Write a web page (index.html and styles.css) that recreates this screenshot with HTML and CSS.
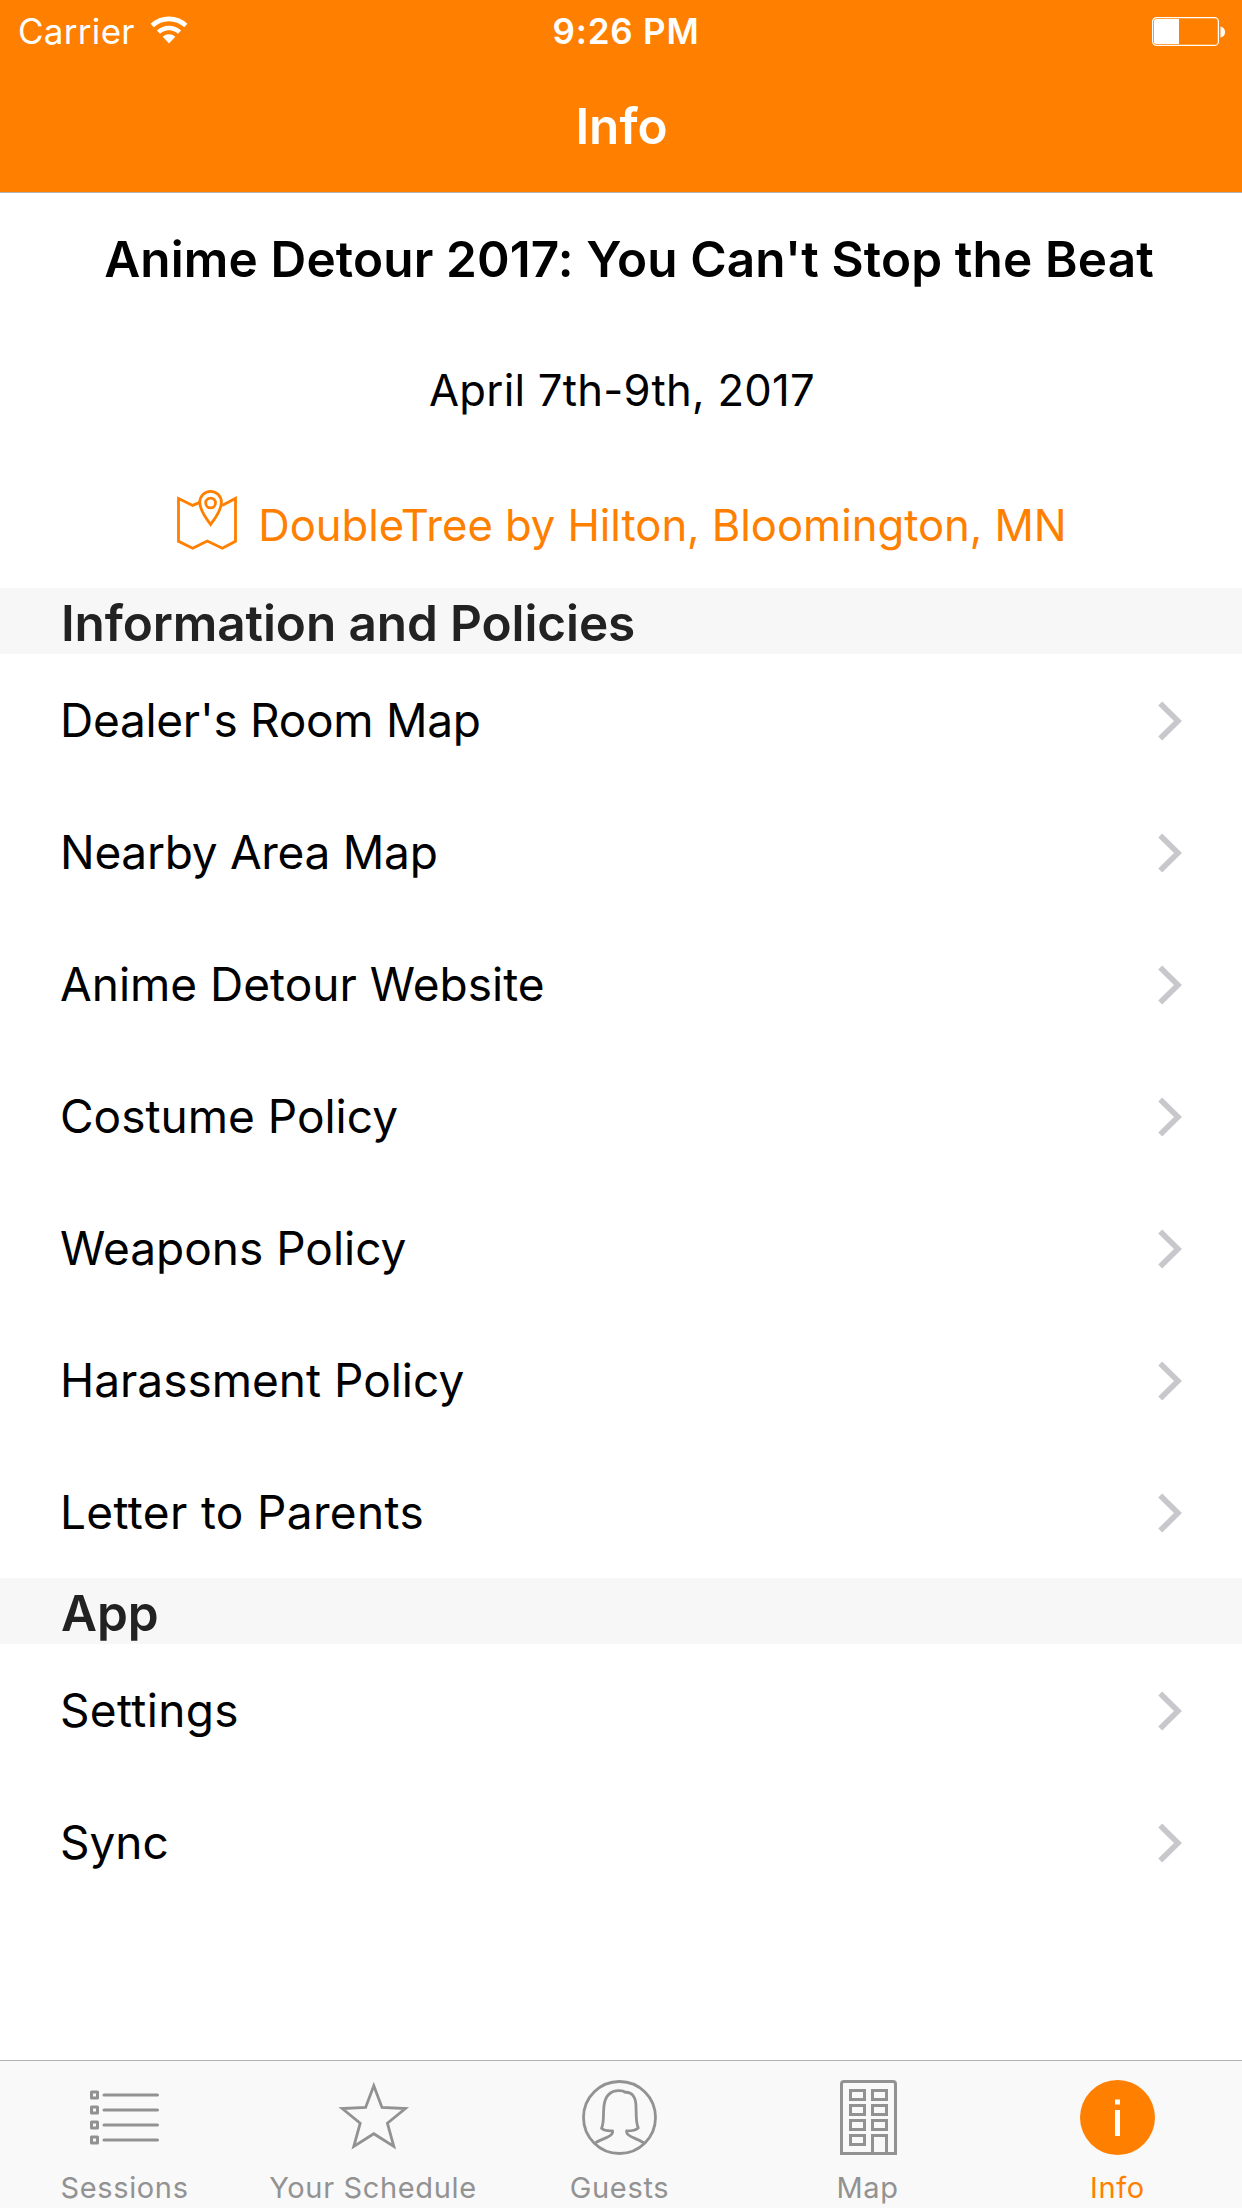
FILE: index.html
```
<!DOCTYPE html>
<html lang="en">
<head>
<meta charset="utf-8">
<title>Info</title>
<link rel="stylesheet" href="styles.css">
</head>
<body>
<svg class="sprite" aria-hidden="true">
  <symbol id="chevron" viewBox="0 0 24 40"><path d="M2.2 2.4 20 20 2.2 37.6" fill="none" stroke="currentColor" stroke-width="5.6"/></symbol>
</svg>
<div class="screen">
  <header class="top">
    <div class="status">
      <div class="carrier">Carrier
        <svg class="wifi" viewBox="0 0 38 28" fill="none" stroke="currentColor" stroke-width="4.6">
          <path d="M2.2 9.5A24.6 24.6 0 0 1 35.8 9.5"/>
          <path d="M8.4 16.1A15.6 15.6 0 0 1 29.6 16.1"/>
          <path d="M19 27.5 12.7 20.7A9.3 9.3 0 0 1 25.3 20.7Z" fill="currentColor" stroke="none"/>
        </svg>
      </div>
      <div class="time">9:26 PM</div>
      <svg class="battery" viewBox="0 0 73 29">
        <rect x=".6" y=".6" width="65.8" height="27.8" rx="4" fill="none" stroke="currentColor" stroke-width="1.2"/>
        <path d="M4 2H27V27H4Q2 27 2 25V4Q2 2 4 2Z" fill="currentColor"/>
        <path d="M68.5 9.5Q73 10.5 73 15T68.5 20.5Z" fill="currentColor"/>
      </svg>
    </div>
    <h1 class="nav-title">Info</h1>
  </header>

  <main class="content">
    <h2 class="event-title">Anime Detour 2017: You Can't Stop the Beat</h2>
    <p class="event-date">April 7th-9th, 2017</p>
    <a class="location">
      <svg class="map-pin" viewBox="0 0 60 60" fill="none" stroke="currentColor" stroke-width="2.8">
        <path d="M22.8 12.4 15.7 15.4 1.5 8.4V51.3L15.7 58.3 30.3 51 45.3 58.3 58.5 51.3V8.4L45 15.6"/>
        <path d="M33.6 34.5C29.5 28.5 22.8 21 22.8 12.2A10.8 10.8 0 0 1 44.4 12.2C44.4 21 37.7 28.5 33.6 34.5Z"/>
        <circle cx="33.6" cy="13" r="4.9"/>
      </svg>
      <span class="location-name">DoubleTree by Hilton, Bloomington, MN</span>
    </a>

    <h3 class="section">Information and Policies</h3>
    <ul class="list">
      <li class="row row-tight">Dealer's Room Map<svg class="chevron"><use href="#chevron"/></svg></li>
      <li class="row row-tight">Nearby Area Map<svg class="chevron"><use href="#chevron"/></svg></li>
      <li class="row">Anime Detour Website<svg class="chevron"><use href="#chevron"/></svg></li>
      <li class="row">Costume Policy<svg class="chevron"><use href="#chevron"/></svg></li>
      <li class="row">Weapons Policy<svg class="chevron"><use href="#chevron"/></svg></li>
      <li class="row">Harassment Policy<svg class="chevron"><use href="#chevron"/></svg></li>
      <li class="row row-loose">Letter to Parents<svg class="chevron"><use href="#chevron"/></svg></li>
    </ul>
    <h3 class="section">App</h3>
    <ul class="list">
      <li class="row row-loose">Settings<svg class="chevron"><use href="#chevron"/></svg></li>
      <li class="row">Sync<svg class="chevron"><use href="#chevron"/></svg></li>
    </ul>
  </main>

  <nav class="tabs">
    <a class="tab">
      <svg class="tab-icon" viewBox="0 0 75 75" fill="none" stroke="currentColor" stroke-width="3">
        <path stroke-linejoin="round" d="M4.5 12h6v6h-6zM4.5 27h6v6h-6zM4.5 42h6v6h-6zM4.5 57h6v6h-6z"/>
        <path stroke-linecap="round" d="M17 15H70.5M17 30H70.5M17 45H70.5M17 60H70.5"/>
      </svg>
      <span class="tab-label">Sessions</span>
    </a>
    <a class="tab">
      <svg class="tab-icon" viewBox="0 0 75 75" fill="none" stroke="currentColor" stroke-width="2.8">
        <path stroke-miterlimit="10" d="M37.8 5.8 46 27.4 69.4 28.5 51.4 43.2 57.8 66.4 37.8 53.7 17.8 66.4 24.2 43.2 6.2 28.5 29.6 27.4Z"/>
      </svg>
      <span class="tab-label">Your Schedule</span>
    </a>
    <a class="tab">
      <svg class="tab-icon" viewBox="0 0 75 75" fill="none" stroke="currentColor" stroke-width="2.8" stroke-linejoin="round">
        <circle cx="37.5" cy="37.5" r="36"/>
        <path d="M13.5 62.7C20 58.8 27.5 57.5 29.8 54 30.6 52.7 30.8 51.8 30.6 50.8 26 51 21.5 50.2 19.5 48.2 22.2 44 21 34 22 25.5 23.5 15 29.5 10.7 37 10.7 40.5 10.7 42 11.2 43 12.3 51 11.8 54 18.5 54 26.5 54.3 35 53.8 43.5 56.3 48 54 50 49 51 44.6 50.9 44.4 51.8 44.6 52.7 45.4 54 48 57.5 55.5 58.5 62 63"/>
      </svg>
      <span class="tab-label">Guests</span>
    </a>
    <a class="tab">
      <svg class="tab-icon" viewBox="0 0 75 75" fill="none" stroke="currentColor" stroke-width="3">
        <path d="M11.5 73.5V4Q11.5 1.5 14 1.5H63Q65.5 1.5 65.5 4V73.5Z"/>
        <path d="M20.5 10.5h14v9h-14zM20.5 25.5h14v9h-14zM20.5 40.5h14v9h-14zM20.5 55.5h14v9h-14zM42.5 10.5h14v9h-14zM42.5 25.5h14v9h-14zM42.5 40.5h14v9h-14zM42.5 73.5v-18h14v18"/>
      </svg>
      <span class="tab-label">Map</span>
    </a>
    <a class="tab tab-active">
      <svg class="tab-icon" viewBox="0 0 75 75">
        <circle cx="37.5" cy="37.5" r="37.5" fill="currentColor"/>
        <path d="M35 19.5h5v5h-5zM35 30h5v26h-5z" fill="#fff"/>
      </svg>
      <span class="tab-label">Info</span>
    </a>
  </nav>
</div>
</body>
</html>
```
FILE: styles.css
```
* {
  box-sizing: border-box;
  margin: 0;
  padding: 0;
}

body {
  background: #fff;
  color: #000;
  font-family: Inter, "Liberation Sans", sans-serif;
}

.sprite {
  display: none;
}

.screen {
  display: flex;
  flex-direction: column;
  width: 1242px;
  height: 2208px;
}

.top {
  height: 193px;
  background: #ff8000;
  border-bottom: 1px solid #b2b2b2;
  color: #fff;
}

.status {
  display: grid;
  grid-template-columns: 1fr auto 1fr;
  align-items: center;
  height: 60px;
  padding: 2px 17px 0 18px;
  font-size: 35px;
  line-height: 58px;
}

.carrier {
  display: flex;
  align-items: center;
  gap: 15px;
  letter-spacing: 0.3px;
}

.wifi {
  width: 38px;
  height: 28px;
  margin-bottom: 3px;
}

.time {
  margin-left: 9px;
  font-weight: 600;
  letter-spacing: 0.8px;
}

.battery {
  justify-self: end;
  width: 73px;
  height: 29px;
}

.nav-title {
  padding-left: 1px;
  font-size: 49.5px;
  font-weight: 600;
  line-height: 132px;
  text-align: center;
}

.content {
  flex: 1;
}

.event-title {
  padding-left: 16px;
  font-size: 49.5px;
  font-weight: 600;
  line-height: 132px;
  letter-spacing: 0.13px;
  text-align: center;
  white-space: nowrap;
}

.event-date {
  padding-left: 2px;
  font-size: 43.6px;
  line-height: 131px;
  letter-spacing: 0.26px;
  text-align: center;
}

.location {
  display: flex;
  align-items: center;
  justify-content: center;
  gap: 21px;
  height: 132px;
  padding: 0 0 4px 2px;
  color: #ff8000;
  font-size: 43.6px;
  letter-spacing: -0.04px;
  white-space: nowrap;
}

.location-name {
  padding-top: 10px;
}

.map-pin {
  width: 60px;
  height: 60px;
}

.section {
  height: 66px;
  padding: 4px 61px 0;
  background: #f7f7f7;
  color: #222;
  font-size: 49.5px;
  font-weight: 600;
  line-height: 62px;
  letter-spacing: -0.1px;
}

.list {
  list-style: none;
}

.row {
  display: flex;
  align-items: center;
  justify-content: space-between;
  height: 132px;
  padding: 0 60px;
  font-size: 46px;
  letter-spacing: 0;
}

.row-tight {
  letter-spacing: -0.28px;
}

.row-loose {
  letter-spacing: 0.35px;
}

.chevron {
  width: 24px;
  height: 40px;
  margin-top: 2px;
  color: #c7c7cc;
}

.tabs {
  display: grid;
  grid-template-columns: 249px 248px 245px 251px 249px;
  height: 148px;
  padding-top: 19px;
  background: #f9f9f9;
  border-top: 1px solid #b2b2b2;
  color: #929292;
}

.tab {
  display: flex;
  flex-direction: column;
  align-items: center;
  gap: 15px;
}

.tab-active {
  color: #ff8000;
}

.tab-icon {
  width: 75px;
  height: 75px;
}

.tab-label {
  font-size: 29px;
  line-height: 36px;
  letter-spacing: 0.65px;
}
```
